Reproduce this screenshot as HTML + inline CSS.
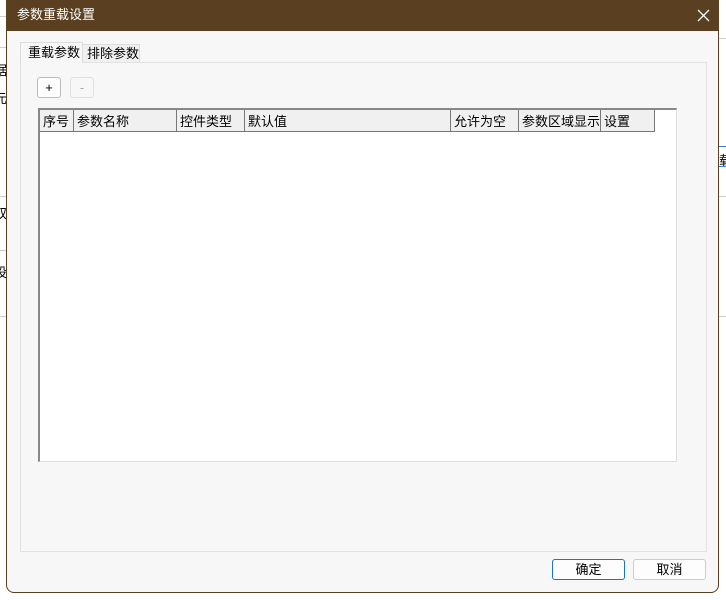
<!DOCTYPE html>
<html><head><meta charset="utf-8"><style>
*{box-sizing:border-box;margin:0;padding:0}
body{width:726px;height:600px;background:#fff;position:relative;overflow:hidden;font-family:"Liberation Sans","Noto Sans CJK SC",sans-serif;font-size:12px;color:#000}
.a{position:absolute}
.frag{position:absolute;font-size:13px;color:#000}
.hl{position:absolute;height:1px;background:#ccc}
#dlg{left:6px;top:0;width:713px;height:593px;background:#f7f7f7;border:1px solid #5a4020;border-top:none;border-radius:0 0 8px 8px}
#title{left:0;top:0;width:711px;height:31px;background:#5a4020;color:#fff;font-size:13px;line-height:30px;padding-left:10px}
.th{position:absolute;top:0;height:22px;line-height:23px;background:#f0f0f0;border:1px solid #777;border-top:none;border-left:none;padding-left:3px;font-size:13px}
.btn{position:absolute;background:#fdfdfd;border:1px solid #ccc;border-radius:3px;text-align:center;font-size:13px}
</style></head><body>
<div class="hl" style="left:0;top:16px;width:8px"></div>
<div class="hl" style="left:0;top:47px;width:8px"></div>
<div class="frag" style="left:-6px;top:60px">据</div>
<div class="frag" style="left:-6px;top:88px">元</div>
<div class="hl" style="left:0;top:196px;width:8px"></div>
<div class="frag" style="left:-6px;top:203px">双</div>
<div class="hl" style="left:0;top:250px;width:8px"></div>
<div class="frag" style="left:-6px;top:262px">设</div>
<div class="hl" style="left:0;top:316px;width:8px"></div>
<div class="hl" style="left:718px;top:38px;width:8px"></div>
<div class="hl" style="left:718px;top:146px;width:8px;background:#3a7bd5"></div>
<div class="frag" style="left:719px;top:150px">载</div>
<div class="hl" style="left:718px;top:166px;width:8px;background:#3a7bd5"></div>
<div class="hl" style="left:718px;top:196px;width:8px"></div>
<div class="hl" style="left:718px;top:316px;width:8px"></div>

<div id="dlg" class="a">
 <div id="title" class="a">参数重载设置</div>
 <svg class="a" style="left:690px;top:9px" width="13" height="13"><path d="M1 1L12 12M12 1L1 12" stroke="#fff" stroke-width="1.3"/></svg>
 <div class="a" style="left:13px;top:62px;width:687px;height:490px;border:1px solid #e2e2e2;background:#f7f7f7"></div>
 <div class="a" style="left:13px;top:42px;width:63px;height:21px;background:#f7f7f7;border:1px solid #dcdcdc;border-bottom:none;line-height:19px;padding-left:7px;font-size:13px">重载参数</div>
 <div class="a" style="left:76px;top:44px;width:57px;height:18px;background:#f0f0f0;border:1px solid #dcdcdc;border-bottom:none;border-left:none;line-height:18px;padding-left:4px;font-size:13px">排除参数</div>
 <div class="btn" style="left:30px;top:77px;width:24px;height:21px;line-height:19px;border-color:#bbb">+</div>
 <div class="btn" style="left:63px;top:77px;width:24px;height:21px;line-height:19px;color:#aaa;background:#f7f7f7;border-color:#e0e0e0">-</div>
 <div class="a" style="left:31px;top:108px;width:639px;height:354px;background:#fff;border:1px solid #ddd;border-top:2px solid #888;border-left:2px solid #888">
  <div class="th" style="left:0;width:34px">序号</div>
  <div class="th" style="left:34px;width:103px">参数名称</div>
  <div class="th" style="left:137px;width:68px">控件类型</div>
  <div class="th" style="left:205px;width:206px">默认值</div>
  <div class="th" style="left:411px;width:68px">允许为空</div>
  <div class="th" style="left:479px;width:82px">参数区域显示</div>
  <div class="th" style="left:561px;width:54px">设置</div>
 </div>
 <div class="btn" style="left:545px;top:559px;width:73px;height:21px;line-height:19px;border-color:#1a73c8">确定</div>
 <div class="btn" style="left:626px;top:559px;width:73px;height:21px;line-height:19px">取消</div>
</div>
</body></html>
